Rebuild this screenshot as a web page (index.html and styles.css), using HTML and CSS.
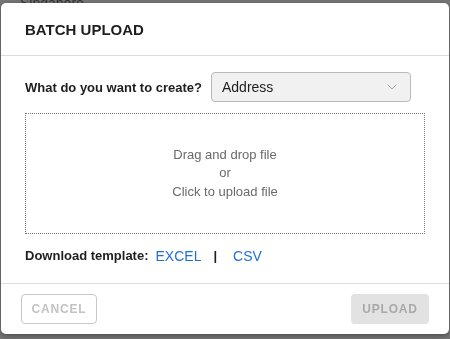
FILE: index.html
```html
<!DOCTYPE html>
<html lang="en">

<head>
    <meta charset="UTF-8">
    <meta name="viewport" content="width=device-width, initial-scale=1.0">
    <title>Batch Upload</title>
    <link rel="stylesheet" href="styles.css">
</head>

<body>
    <div class="page-behind">
        <p class="page-text">Singapore</p>
    </div>

    <div class="overlay">
        <div class="modal">
            <div class="modal-header">
                <h2>BATCH UPLOAD</h2>
            </div>
            <div class="modal-body">
                <div class="create-row">
                    <label for="create-type">What do you want to create?</label>
                    <div class="select-box">
                        <span class="select-value">Address</span>
                        <svg class="chevron" width="10" height="6" viewBox="0 0 10 6">
                            <path d="M0.5 0.5 L5 5 L9.5 0.5" fill="none" stroke="#a5a5a5" stroke-width="1"/>
                        </svg>
                    </div>
                </div>
                <div class="drop-zone">
                    <p>Drag and drop file</p>
                    <p>or</p>
                    <p>Click to upload file</p>
                </div>
                <div class="template-row">
                    <span class="template-label">Download template:</span>
                    <a href="#" class="template-link">EXCEL</a>
                    <span class="separator">|</span>
                    <a href="#" class="template-link csv">CSV</a>
                </div>
            </div>
            <div class="modal-footer">
                <button class="btn-cancel" disabled>CANCEL</button>
                <button class="btn-upload" disabled>UPLOAD</button>
            </div>
        </div>
    </div>
</body>

</html>
```

FILE: styles.css
```css
body {
    font-family: "Liberation Sans", Arial, sans-serif;
    margin: 0;
    padding: 0;
    width: 450px;
    height: 339px;
    overflow: hidden;
    background-color: #fff;
}

.page-behind {
    padding: 0 20px;
}

.page-text {
    margin: 0;
    font-size: 14px;
    color: #222;
    line-height: 6px;
}

.overlay {
    position: fixed;
    top: 0;
    left: 0;
    right: 0;
    bottom: 0;
    background-color: rgba(60, 60, 60, 0.7);
}

.modal {
    position: absolute;
    top: 3px;
    left: 1px;
    width: 448px;
    height: 331px;
    background-color: #fff;
    border-radius: 5px;
    box-shadow: 0 2px 6px rgba(0, 0, 0, 0.35);
    display: flex;
    flex-direction: column;
}

.modal-header {
    height: 52px;
    padding: 0 24px;
    display: flex;
    align-items: center;
    border-bottom: 1px solid #dcdcdc;
}

.modal-header h2 {
    margin: 0;
    font-size: 15px;
    font-weight: bold;
    color: #1e1e1e;
}

.modal-body {
    flex-grow: 1;
    padding: 16px 24px 0;
}

.create-row {
    display: flex;
    align-items: center;
}

.create-row label {
    font-size: 13px;
    font-weight: bold;
    color: #1e1e1e;
    margin-right: 9px;
}

.select-box {
    width: 200px;
    height: 30px;
    box-sizing: border-box;
    padding: 0 13px 0 10px;
    background-color: #f1f1f1;
    border: 1px solid #b9b9b9;
    border-radius: 4px;
    display: flex;
    align-items: center;
    justify-content: space-between;
}

.select-value {
    font-size: 14px;
    color: #1e1e1e;
}

.drop-zone {
    margin-top: 11px;
    height: 121px;
    box-sizing: border-box;
    border: 1px dotted #777;
    display: flex;
    flex-direction: column;
    justify-content: center;
    align-items: center;
}

.drop-zone p {
    margin: 0;
    font-size: 13px;
    line-height: 18.5px;
    color: #6a6a6a;
}

.template-row {
    display: flex;
    align-items: center;
    margin-top: 13px;
    height: 17px;
}

.template-label {
    font-size: 13px;
    font-weight: bold;
    color: #1e1e1e;
    margin-right: 7px;
}

.template-link {
    font-size: 14px;
    color: #1f6fd9;
    text-decoration: none;
}

.separator {
    font-size: 13px;
    font-weight: bold;
    color: #1e1e1e;
    margin: 0 16px 0 12px;
}

.modal-footer {
    border-top: 1px solid #dcdcdc;
    padding: 10px 20px;
    display: flex;
    justify-content: space-between;
    align-items: center;
}

.btn-cancel,
.btn-upload {
    font-family: "Liberation Sans", Arial, sans-serif;
    height: 30px;
    font-size: 12px;
    font-weight: bold;
    letter-spacing: 0.8px;
    border-radius: 4px;
}

.btn-cancel {
    width: 76px;
    background-color: #fff;
    color: #c2c2c2;
    border: 1px solid #c8c8c8;
}

.btn-upload {
    width: 78px;
    background-color: #e2e2e2;
    color: #a9a9a9;
    border: none;
}
```
